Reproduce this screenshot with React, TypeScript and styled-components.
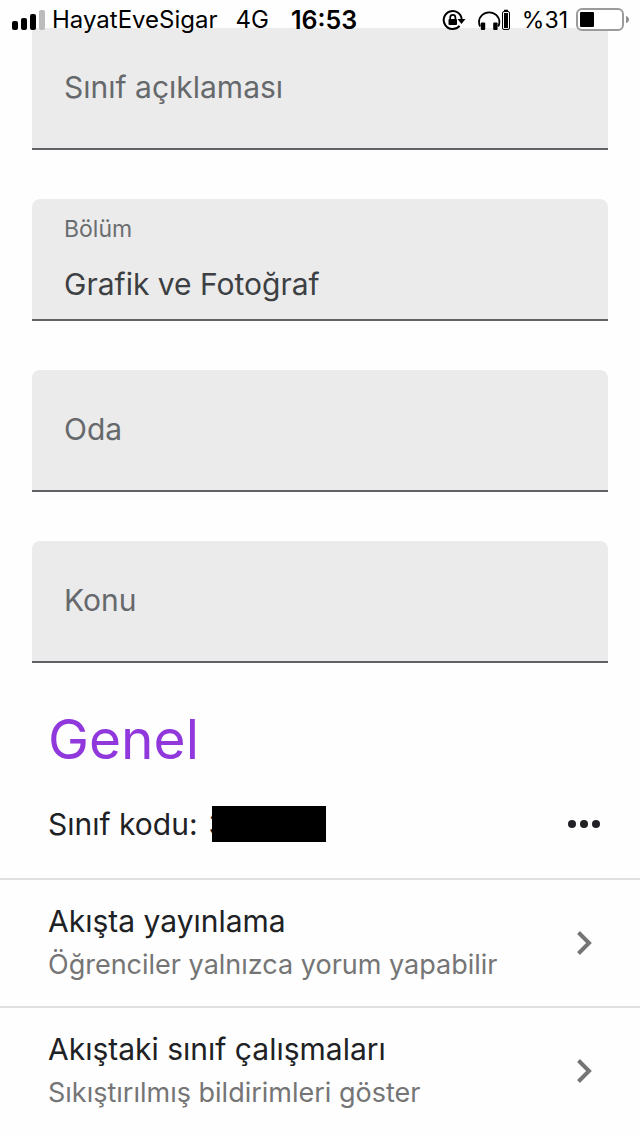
import React from "react";
import styled, { createGlobalStyle } from "styled-components";

const GlobalStyle = createGlobalStyle`
  *, *::before, *::after { box-sizing: border-box; }
  body {
    margin: 0;
    background: #fefefe;
    color: #202124;
    font-family: Inter, "Liberation Sans", sans-serif;
    font-size: 30px;
  }
`;

const Screen = styled.div`
  position: relative;
  padding-top: 28px;
`;

const StatusBar = styled.header`
  position: absolute;
  top: 0;
  left: 0;
  right: 0;
  height: 40px;
  padding: 0 11px 0 12px;
  display: flex;
  align-items: center;
  justify-content: space-between;
  color: #000;
  line-height: 28px;
`;

const StatusGroup = styled.div<{ $gap: number }>`
  display: flex;
  align-items: center;
  gap: ${(p) => p.$gap}px;
`;

const StatusText = styled.span`
  font-size: 24px;
`;

const Percent = styled.span`
  font-size: 23px;
`;

const Clock = styled.time`
  margin-left: 4px;
  font-size: 25px;
  font-weight: 600;
`;

const Form = styled.form`
  display: flex;
  flex-direction: column;
  gap: 49px;
  padding: 0 32px;
`;

const FieldBox = styled.div<{ $flatTop?: boolean }>`
  display: flex;
  flex-direction: column;
  height: 122px;
  padding: 0 32px;
  background: #ebebeb;
  border-bottom: 2px solid #5f6164;
  border-radius: ${(p) => (p.$flatTop ? "0" : "8px 8px 0 0")};
`;

const FloatingLabel = styled.label`
  padding-top: 16px;
  color: #6b6e71;
  font-size: 23px;
  line-height: 28px;
`;

const TextInput = styled.input<{ $filled: boolean }>`
  flex: 1;
  width: 100%;
  min-width: 0;
  padding: ${(p) => (p.$filled ? "6px 0 0" : "0 0 2px")};
  border: 0;
  outline: 0;
  background: transparent;
  color: #3c4043;
  font: inherit;
  &::placeholder {
    color: #66696c;
    opacity: 1;
  }
`;

const Heading = styled.h2`
  margin: 0;
  padding: 40px 48px 0;
  color: #9038dc;
  font-size: 55px;
  font-weight: 400;
  line-height: 72px;
`;

const CodeRow = styled.div`
  display: flex;
  align-items: center;
  height: 103px;
  padding: 0 36px 6px 48px;
`;

const CodeText = styled.span`
  display: flex;
  gap: 11px;
`;

const Redaction = styled.span`
  width: 114px;
  height: 36px;
  margin-left: -15px;
  background: #000;
`;

const MoreButton = styled.button`
  display: flex;
  margin-left: auto;
  padding: 12px 4px;
  border: 0;
  background: none;
  color: #202124;
`;

const SettingRow = styled.button`
  display: flex;
  align-items: center;
  justify-content: space-between;
  width: 100%;
  height: 128px;
  padding: 0 46px 0 48px;
  border: 0;
  border-top: 2px solid #e0e0e0;
  background: none;
  color: inherit;
  font: inherit;
  text-align: left;
`;

const SettingText = styled.span`
  display: flex;
  flex-direction: column;
`;

const SettingTitle = styled.span`
  line-height: 44px;
`;

const SettingDetail = styled.span`
  color: #757575;
  font-size: 27px;
  line-height: 44px;
`;

const SignalIcon = () => (
  <svg width="34" height="22" viewBox="0 0 34 22" aria-hidden="true">
    <rect x="0" y="12" width="6" height="9" rx="2" />
    <rect x="9" y="9" width="6" height="12" rx="2" />
    <rect x="18" y="5" width="6" height="16" rx="2" />
    <rect x="27" y="1" width="6" height="20" rx="2" fill="#bcbcbc" />
  </svg>
);

const RotationLockIcon = () => (
  <svg width="24" height="22" viewBox="0 0 24 22" fill="none" stroke="#000" aria-hidden="true">
    <path d="M17.6 16.8A9 9 0 1 1 19.7 10.5" strokeWidth="2" />
    <path d="M15.5 10H23.5L19.5 15z" fill="#000" stroke="none" />
    <rect x="6.5" y="10" width="8.5" height="6" rx="1" fill="#000" stroke="none" />
    <path d="M8.2 10.5V8.5a2.6 2.6 0 0 1 5.2 0v2" strokeWidth="1.7" />
  </svg>
);

const HeadphonesIcon = () => (
  <svg width="34" height="22" viewBox="0 0 34 22" fill="none" stroke="#000" aria-hidden="true">
    <path d="M2.2 17.5C1.3 16 1 14.5 1 13a10.2 9.7 0 0 1 20.4 0c0 1.500-.3 3-1.200 4.500" strokeWidth="1.8" />
    <rect x="2.8" y="13.500" width="4.400" height="7.500" rx="1" fill="#000" stroke="none" />
    <rect x="15.200" y="13.500" width="4.400" height="7.500" rx="1" fill="#000" stroke="none" />
    <rect x="24.500" y="2.500" width="7" height="18" rx="1.500" strokeWidth="1" />
    <rect x="26" y="4" width="4" height="15" fill="#000" stroke="none" />
    <path d="M26 1.500h4" strokeWidth="1.500" />
  </svg>
);

const BatteryIcon = () => (
  <svg width="53" height="24" viewBox="0 0 53 24" aria-hidden="true">
    <rect x="1" y="1" width="46" height="21" rx="5" fill="#fff" stroke="#9b9b9b" strokeWidth="2" />
    <rect x="4" y="4" width="14" height="15" rx="1" />
    <path d="M50 8c4 1 4 6 0 7z" fill="#8f8f8f" />
  </svg>
);

const MoreIcon = () => (
  <svg width="32" height="8" viewBox="0 0 32 8" fill="currentColor" aria-hidden="true">
    <circle cx="4" cy="4" r="4" />
    <circle cx="16" cy="4" r="4" />
    <circle cx="28" cy="4" r="4" />
  </svg>
);

const ChevronIcon = () => (
  <svg width="18" height="24" viewBox="0 0 18 24" fill="none" stroke="#757575" strokeWidth="4" aria-hidden="true">
    <path d="M2.5 1.5 13 12 2.5 22.5" />
  </svg>
);

type FieldProps = { id: string; label: string; value?: string; flatTop?: boolean };

const Field = ({ id, label, value, flatTop }: FieldProps) => (
  <FieldBox $flatTop={flatTop}>
    {value && <FloatingLabel htmlFor={id}>{label}</FloatingLabel>}
    <TextInput
      id={id}
      $filled={Boolean(value)}
      defaultValue={value}
      placeholder={value ? undefined : label}
      aria-label={value ? undefined : label}
    />
  </FieldBox>
);

const Setting = ({ title, detail }: { title: string; detail: string }) => (
  <SettingRow type="button">
    <SettingText>
      <SettingTitle>{title}</SettingTitle>
      <SettingDetail>{detail}</SettingDetail>
    </SettingText>
    <ChevronIcon />
  </SettingRow>
);

export default function App() {
  return (
    <>
      <GlobalStyle />
      <Screen>
        <Form>
          <Field id="description" label="Sınıf açıklaması" flatTop />
          <Field id="section" label="Bölüm" value="Grafik ve Fotoğraf" />
          <Field id="room" label="Oda" />
          <Field id="subject" label="Konu" />
        </Form>
        <Heading>Genel</Heading>
        <CodeRow>
          <CodeText>
            <span>Sınıf kodu:</span>
            <span>3</span>
          </CodeText>
          <Redaction />
          <MoreButton type="button" aria-label="Diğer seçenekler">
            <MoreIcon />
          </MoreButton>
        </CodeRow>
        <Setting title="Akışta yayınlama" detail="Öğrenciler yalnızca yorum yapabilir" />
        <Setting title="Akıştaki sınıf çalışmaları" detail="Sıkıştırılmış bildirimleri göster" />
        <StatusBar>
          <StatusGroup $gap={18}>
            <StatusGroup $gap={6}>
              <SignalIcon />
              <StatusText>HayatEveSigar</StatusText>
            </StatusGroup>
            <StatusText>4G</StatusText>
            <Clock>16:53</Clock>
          </StatusGroup>
          <StatusGroup $gap={10}>
            <StatusGroup $gap={12}>
              <RotationLockIcon />
              <HeadphonesIcon />
            </StatusGroup>
            <StatusGroup $gap={8}>
              <Percent>%31</Percent>
              <BatteryIcon />
            </StatusGroup>
          </StatusGroup>
        </StatusBar>
      </Screen>
    </>
  );
}
